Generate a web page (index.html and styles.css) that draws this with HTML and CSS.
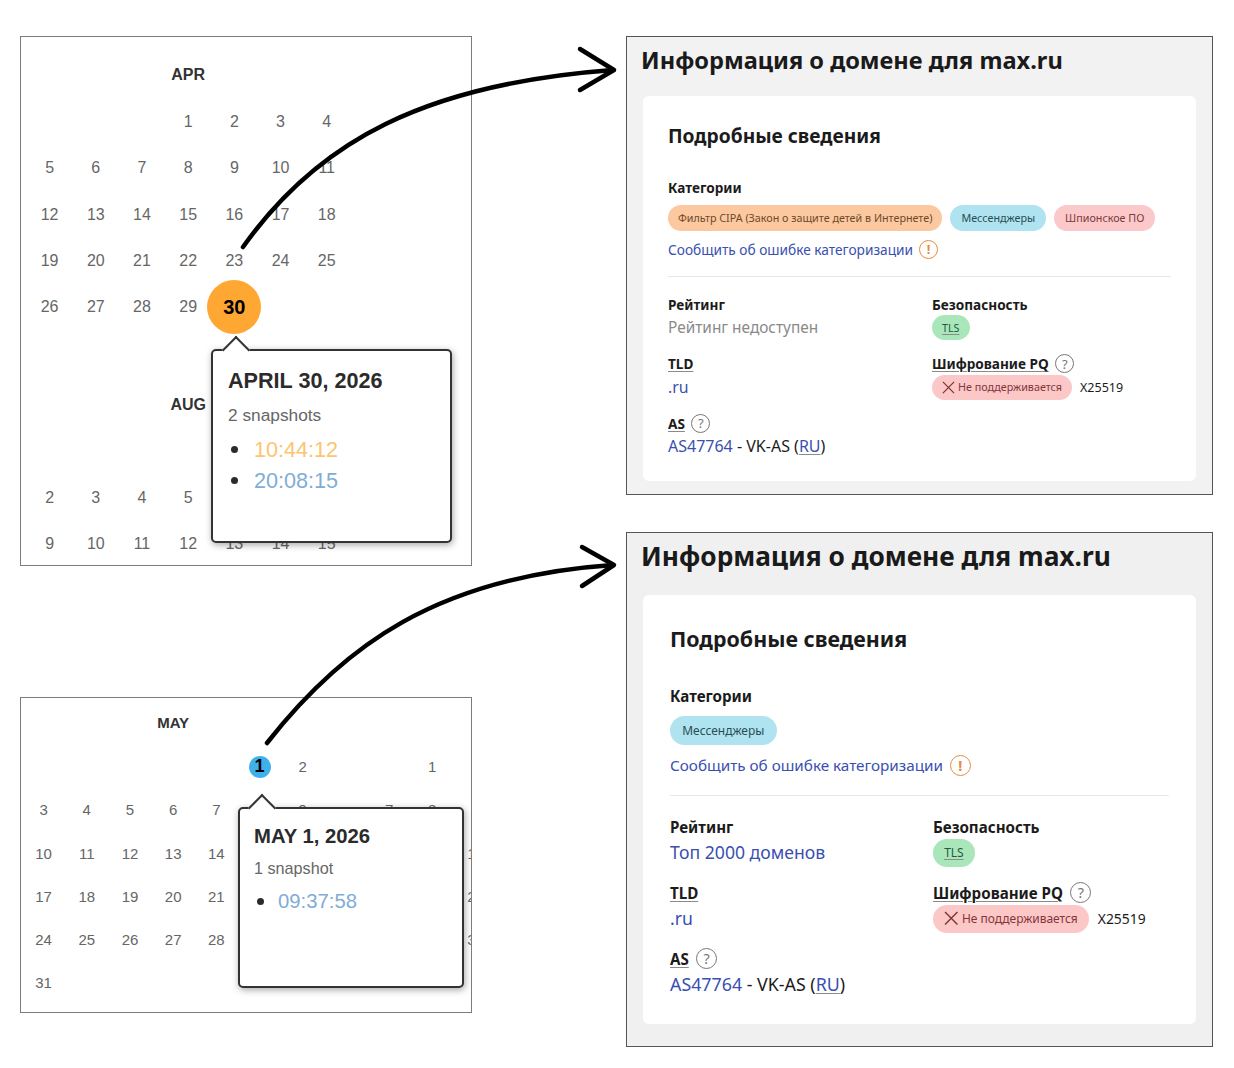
FILE: index.html
```html
<!DOCTYPE html>
<html lang="ru">
<head>
<meta charset="utf-8">
<title>max.ru</title>
<link rel="stylesheet" href="styles.css">
</head>
<body>
<main class="canvas">

  <section class="cal cal-a">
    <div class="month">
      <div class="m-title">APR</div>
      <span></span><span></span><span></span><span>1</span><span>2</span><span>3</span><span>4</span>
      <span>5</span><span>6</span><span>7</span><span>8</span><span>9</span><span>10</span><span>11</span>
      <span>12</span><span>13</span><span>14</span><span>15</span><span>16</span><span>17</span><span>18</span>
      <span>19</span><span>20</span><span>21</span><span>22</span><span>23</span><span>24</span><span>25</span>
      <span>26</span><span>27</span><span>28</span><span>29</span><span class="hit hit-orange">30</span><span></span><span></span>
      <span></span><span></span><span></span><span></span><span></span><span></span><span></span>
    </div>
    <div class="month">
      <div class="m-title">AUG</div>
      <span></span><span></span><span></span><span></span><span></span><span></span><span></span>
      <span>2</span><span>3</span><span>4</span><span>5</span><span></span><span></span><span></span>
      <span>9</span><span>10</span><span>11</span><span>12</span><span>13</span><span>14</span><span>15</span>
    </div>
    <div class="pop pop-a">
      <h4 class="pop-title">APRIL 30, 2026</h4>
      <p class="pop-sub">2 snapshots</p>
      <ul class="pop-list">
        <li class="t-orange">10:44:12</li>
        <li class="t-blue">20:08:15</li>
      </ul>
    </div>
  </section>

  <section class="cal cal-b">
    <div class="months">
      <div class="month">
        <div class="m-title">MAY</div>
        <span></span><span></span><span></span><span></span><span></span><span class="hit hit-blue">1</span><span>2</span>
        <span>3</span><span>4</span><span>5</span><span>6</span><span>7</span><span>8</span><span>9</span>
        <span>10</span><span>11</span><span>12</span><span>13</span><span>14</span><span></span><span></span>
        <span>17</span><span>18</span><span>19</span><span>20</span><span>21</span><span></span><span></span>
        <span>24</span><span>25</span><span>26</span><span>27</span><span>28</span><span></span><span></span>
        <span>31</span>
      </div>
      <div class="month month-clip">
        <div class="m-title"></div>
        <span></span><span>1</span><span></span>
        <span>7</span><span>8</span><span></span>
        <span></span><span></span><span>16</span>
        <span></span><span></span><span>23</span>
        <span></span><span></span><span>30</span>
      </div>
    </div>
    <div class="pop pop-b">
      <h4 class="pop-title">MAY 1, 2026</h4>
      <p class="pop-sub">1 snapshot</p>
      <ul class="pop-list">
        <li class="t-blue">09:37:58</li>
      </ul>
    </div>
  </section>

  <section class="info info-a">
    <h1 class="info-h">Информация о домене для max.ru</h1>
    <div class="card">
      <h2 class="card-h">Подробные сведения</h2>
      <div class="label label-cat">Категории</div>
      <div class="chips">
        <span class="chip chip-orange">Фильтр CIPA (Закон о защите детей в Интернете)</span>
        <span class="chip chip-blue">Мессенджеры</span>
        <span class="chip chip-pink">Шпионское ПО</span>
      </div>
      <div class="report"><a class="link">Сообщить об ошибке категоризации</a><span class="ico ico-warn">!</span></div>
      <hr class="rule">
      <div class="facts">
        <div class="fact">
          <div class="label">Рейтинг</div>
          <div class="value value-text muted">Рейтинг недоступен</div>
        </div>
        <div class="fact">
          <div class="label">Безопасность</div>
          <div class="value"><span class="chip chip-green"><u>TLS</u></span></div>
        </div>
        <div class="fact">
          <div class="label"><u>TLD</u></div>
          <div class="value value-text"><a class="link">.ru</a></div>
        </div>
        <div class="fact">
          <div class="label"><u>Шифрование PQ</u><span class="ico ico-help">?</span></div>
          <div class="value">
            <span class="chip chip-red"><svg class="x" viewBox="0 0 14 14"><path d="M1 1l12 12M13 1L1 13"/></svg>Не поддерживается</span>
            <span class="algo">X25519</span>
          </div>
        </div>
        <div class="fact">
          <div class="label"><u>AS</u><span class="ico ico-help">?</span></div>
          <div class="value value-text value-as"><a class="link">AS47764</a> - VK-AS (<a class="link"><u>RU</u></a>)</div>
        </div>
      </div>
    </div>
  </section>

  <section class="info info-b">
    <h1 class="info-h">Информация о домене для max.ru</h1>
    <div class="card">
      <h2 class="card-h">Подробные сведения</h2>
      <div class="label label-cat">Категории</div>
      <div class="chips">
        <span class="chip chip-blue">Мессенджеры</span>
      </div>
      <div class="report"><a class="link">Сообщить об ошибке категоризации</a><span class="ico ico-warn">!</span></div>
      <hr class="rule">
      <div class="facts">
        <div class="fact">
          <div class="label">Рейтинг</div>
          <div class="value value-text"><a class="link">Топ 2000 доменов</a></div>
        </div>
        <div class="fact">
          <div class="label">Безопасность</div>
          <div class="value"><span class="chip chip-green"><u>TLS</u></span></div>
        </div>
        <div class="fact">
          <div class="label"><u>TLD</u></div>
          <div class="value value-text"><a class="link">.ru</a></div>
        </div>
        <div class="fact">
          <div class="label"><u>Шифрование PQ</u><span class="ico ico-help">?</span></div>
          <div class="value">
            <span class="chip chip-red"><svg class="x" viewBox="0 0 14 14"><path d="M1 1l12 12M13 1L1 13"/></svg>Не поддерживается</span>
            <span class="algo">X25519</span>
          </div>
        </div>
        <div class="fact">
          <div class="label"><u>AS</u><span class="ico ico-help">?</span></div>
          <div class="value value-text value-as"><a class="link">AS47764</a> - VK-AS (<a class="link"><u>RU</u></a>)</div>
        </div>
      </div>
    </div>
  </section>

  <svg class="arrows" viewBox="0 0 1234 1068" width="1234" height="1068">
    <path d="M243 247C318 141 425 84 613 70"/>
    <path d="M580 49L614 70L580 90"/>
    <path d="M267 743C343 646 437 577 613 565"/>
    <path d="M582 547L614 565L582 586"/>
  </svg>

</main>
</body>
</html>
```

FILE: styles.css
```css
* { box-sizing: border-box; }

html, body { margin: 0; padding: 0; background: #fff; }

.canvas {
  position: relative;
  width: 1234px;
  height: 1068px;
  overflow: hidden;
}

/* Calendars */
.cal {
  position: absolute;
  left: 20px;
  width: 452px;
  border: 1px solid #7c7c7c;
  background: #fff;
  overflow: hidden;
  font-family: "Liberation Sans", Arial, sans-serif;
  color: #666;
}
.cal-a {
  top: 36px;
  height: 530px;
  padding: 16px 0 0 5.5px;
  --cell: 46.2px;
  font-size: 16px;
}
.cal-a .month:first-child .m-title { padding-bottom: 2px; }
.cal-b {
  top: 697px;
  height: 316px;
  padding: 4px 0 0 1px;
  --cell: 43.2px;
  font-size: 15px;
}
.cal-b .m-title { padding-bottom: 2px; }
.months { display: flex; gap: var(--cell); }
.month {
  display: grid;
  grid-template-columns: repeat(7, var(--cell));
  grid-auto-rows: var(--cell);
  flex: none;
  margin-bottom: 6px;
}
.month-clip { grid-template-columns: repeat(3, var(--cell)); }
.month > span {
  display: flex;
  align-items: center;
  justify-content: center;
  position: relative;
}
.m-title {
  grid-column: 1 / -1;
  display: flex;
  align-items: center;
  justify-content: center;
  font-weight: 700;
  color: #333;
}
.month > .hit { color: #000; font-weight: 700; z-index: 0; }
.hit::before {
  content: "";
  position: absolute;
  left: 50%;
  top: 50%;
  border-radius: 50%;
  transform: translate(-50%, -50%);
  z-index: -1;
}
.hit-orange { font-size: 20px; }
.hit-orange::before { width: 54px; height: 54px; background: #ffa733; }
.hit-blue { font-size: 18px; }
.hit-blue::before { width: 22px; height: 22px; background: #3fb0ec; }

/* Popups */
.pop {
  position: absolute;
  background: #fff;
  border: 2px solid #333;
  border-radius: 5px;
  box-shadow: 1px 2px 7px rgba(0, 0, 0, .35);
}
.pop::before {
  content: "";
  position: absolute;
  top: -11px;
  width: 18px;
  height: 18px;
  background: #fff;
  border-top: 2px solid #333;
  border-left: 2px solid #333;
  transform: rotate(45deg);
}
.pop-a {
  left: 190px;
  top: 312px;
  width: 241px;
  height: 194px;
  padding: 16px 0 0 15px;
  --time: 21.6px;
  --title: 21.6px;
  --sub: 17.3px;
  --sub-gap: 10px;
  --row: 31px;
  --dot-gap: 16px;
}
.pop-a::before { left: 13px; }
.pop-b {
  left: 217px;
  top: 109px;
  width: 226px;
  height: 181px;
  padding: 14px 0 0 14px;
  --time: 20.3px;
  --title: 20.3px;
  --sub: 16.2px;
  --sub-gap: 7px;
  --row: 29px;
  --dot-gap: 14px;
}
.pop-b::before { left: 12px; }
.pop-title {
  margin: 0;
  font-size: var(--title);
  line-height: 27px;
  font-weight: 700;
  color: #2b2b2b;
}
.pop-sub {
  margin: var(--sub-gap) 0 0;
  font-size: var(--sub);
  line-height: 22px;
  color: #666;
}
.pop-list { list-style: none; margin: 8px 0 0; padding: 0; }
.pop-list li {
  display: flex;
  align-items: center;
  height: var(--row);
  font-size: var(--time);
}
.pop-list li::before {
  content: "";
  flex: none;
  width: 7px;
  height: 7px;
  margin: 0 var(--dot-gap) 0 3px;
  border-radius: 50%;
  background: #2b2b2b;
}
.t-orange { color: #fdc46f; }
.t-blue { color: #7fadd6; }

/* Domain panels */
.info {
  position: absolute;
  left: 626px;
  width: 587px;
  border: 1px solid #555;
  background: #f2f2f2;
  padding: 0 16px;
  font-family: "Noto Sans", "Open Sans", sans-serif;
  color: #1b1b1b;
}
.info-a { top: 36px; height: 459px; --u: 1px; --head: 59px; --head-lh: 47px; --inset: 25px; --col: 264px; }
.info-b { top: 532px; height: 515px; --u: 1.114px; --head: 62px; --head-lh: 47px; --inset: 27px; --col: 263px; background: #f0f0f0; }
.info-h {
  margin: 0 0 0 -2px;
  height: var(--head);
  line-height: var(--head-lh);
  font-size: calc(var(--u) * 23.6);
  font-weight: 700;
  white-space: nowrap;
  color: #1a1a1a;
}
.card {
  background: #fff;
  border-radius: 6px;
  padding: calc(var(--u) * 20) var(--inset) 0;
  height: calc(var(--u) * 385);
}
.card-h {
  margin: 0 0 calc(var(--u) * 21);
  font-size: calc(var(--u) * 19.2);
  line-height: calc(var(--u) * 40);
  font-weight: 700;
}
.label {
  display: flex;
  align-items: center;
  height: calc(var(--u) * 20);
  font-size: calc(var(--u) * 13.6);
  font-weight: 700;
  white-space: nowrap;
}
.label u, .chip u, .link u {
  text-decoration-color: #8a8a8a;
  text-decoration-thickness: 1px;
  text-underline-offset: 2px;
}
.chips {
  display: flex;
  gap: calc(var(--u) * 8);
  margin-top: calc(var(--u) * 8);
}
.chip {
  display: inline-flex;
  align-items: center;
  height: calc(var(--u) * 26);
  padding: 0 calc(var(--u) * 10);
  border-radius: calc(var(--u) * 13);
  font-size: calc(var(--u) * 10.75);
  white-space: nowrap;
}
.chip-orange { background: #fcc89f; color: #6e4a2c; }
.chip-blue { background: #aee3ef; color: #2b4c55; padding: 0 calc(var(--u) * 11); }
.chip-pink { background: #fbc9c9; color: #7c3a3a; padding: 0 calc(var(--u) * 11); }
.chip-green { background: #a9e7bb; color: #24593a; height: calc(var(--u) * 25); }
.chip-red { background: #fcc7c7; color: #83363a; height: calc(var(--u) * 25); }
.report {
  display: flex;
  align-items: center;
  gap: calc(var(--u) * 6);
  height: calc(var(--u) * 20);
  margin-top: calc(var(--u) * 8);
  font-size: calc(var(--u) * 13.7);
}
.link { color: #3a4fb0; }
.rule {
  border: 0;
  height: 1px;
  margin: calc(var(--u) * 17) 0;
  background: #e8e8e8;
}
.ico {
  display: inline-flex;
  flex: none;
  align-items: center;
  justify-content: center;
  width: calc(var(--u) * 19);
  height: calc(var(--u) * 19);
  border-radius: 50%;
  font-size: calc(var(--u) * 13);
  font-weight: 400;
}
.ico-warn { border: 1.5px solid #e88a3c; color: #e88a3c; font-weight: 700; }
.ico-help { margin-left: calc(var(--u) * 6.5); border: 1.5px solid #777; color: #777; }
.facts {
  display: grid;
  grid-template-columns: var(--col) 1fr;
  row-gap: calc(var(--u) * 13.5);
}
.fact { min-width: 0; }
.value {
  display: flex;
  align-items: center;
  gap: calc(var(--u) * 8);
  height: calc(var(--u) * 25);
  margin-top: 1px;
  font-size: calc(var(--u) * 15.8);
  white-space: nowrap;
}
.value-text {
  display: block;
  line-height: calc(var(--u) * 25);
}
.value-as { font-size: calc(var(--u) * 16); }
.muted { color: #8a8a8a; font-size: calc(var(--u) * 15.4); }
.algo { font-size: calc(var(--u) * 12.5); }
.x {
  width: calc(var(--u) * 13);
  height: calc(var(--u) * 13);
  margin-right: calc(var(--u) * 3);
  fill: none;
  stroke: #7c3034;
  stroke-width: 1.3;
}

/* Annotation arrows */
.arrows {
  position: absolute;
  left: 0;
  top: 0;
  pointer-events: none;
  fill: none;
  stroke: #000;
  stroke-width: 4.5;
  stroke-linecap: round;
  stroke-linejoin: round;
}
```
